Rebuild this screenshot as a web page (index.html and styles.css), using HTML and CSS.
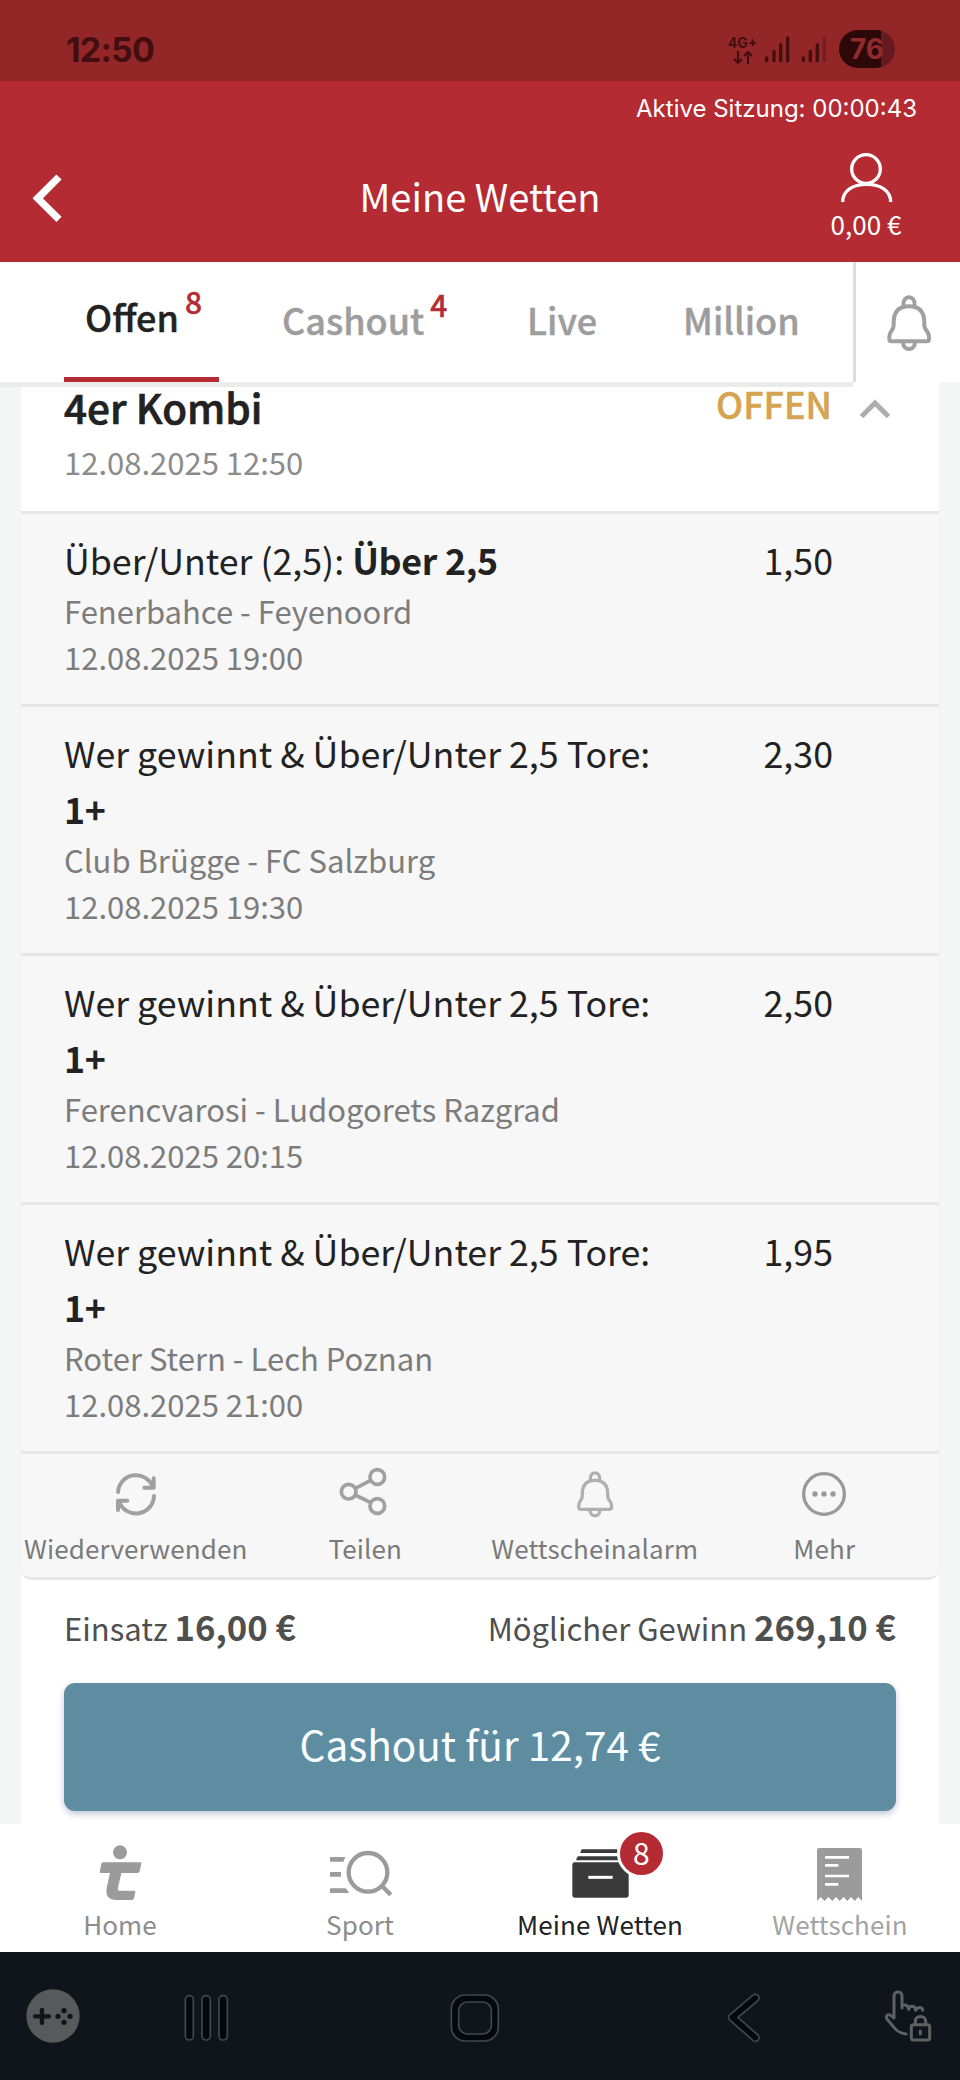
FILE: index.html
```html
<!DOCTYPE html>
<html lang="de">
<head>
<meta charset="utf-8">
<title>Meine Wetten</title>
<link rel="stylesheet" href="styles.css">
</head>
<body>
<svg width="0" height="0" class="defs">
  <symbol id="bell" viewBox="1198 90 180 185">
    <path d="M1271 130C1268 98 1308 98 1305 130M1242 190V182C1242 150 1258 133 1288 133S1334 150 1334 182V190C1334 206 1348 206 1348 224V231Q1348 238 1341 238H1236Q1229 238 1229 231V224C1229 206 1242 206 1242 190ZM1270 241C1270 268 1306 268 1306 241" fill="none" stroke="currentColor" stroke-width="12"/>
  </symbol>
</svg>

<div class="status">
  <div class="clock">12:50</div>
  <div class="net">
    <span class="net-type">4G+</span>
    <svg width="20" height="14" viewBox="0 0 20 14"><path d="M5 0V12M1 8L5 12L9 8M15 13V1M11 5L15 1L19 5" fill="none" stroke="#440e10" stroke-width="2.200"/></svg>
  </div>
  <svg class="signal" width="70" height="40" viewBox="840 90 210 120">
    <g fill="none" stroke="#440e10" stroke-width="10" stroke-linecap="round">
      <path d="M860 174V182M882 154V182M902 134V182M923 114V182M970 174V182M991 154V182M1012 134V182"/>
      <path d="M1033 114V182" stroke="#74201f"/>
    </g>
  </svg>
  <div class="battery">76</div>
</div>

<header class="header">
  <div class="session">Aktive Sitzung: 00:00:43</div>
  <div class="bar">
    <svg class="back" width="37" height="55" viewBox="90 510 111 165"><path d="M177 531L113 595L177 658" fill="none" stroke="#fff" stroke-width="22"/></svg>
    <h1 class="title">Meine Wetten</h1>
    <div class="account">
      <svg width="60" height="55" viewBox="1069 450 180 165"><g fill="none" stroke="#fff" stroke-width="10"><circle cx="1159" cy="507" r="43"/><path d="M1089 606C1089 571 1120 553 1161 553S1233 571 1233 606"/></g></svg>
      <span>0,00 €</span>
    </div>
  </div>
</header>

<nav class="tabs">
  <div class="tab-list">
    <div class="tab active"><span>Offen</span><b>8</b></div>
    <div class="tab"><span>Cashout</span><b>4</b></div>
    <div class="tab"><span>Live</span></div>
    <div class="tab"><span>Million</span></div>
  </div>
  <div class="alarm"><svg width="60" height="61.7"><use href="#bell"/></svg></div>
</nav>

<main class="page">
  <section class="card">
    <div class="card-head">
      <div>
        <h2 class="bet-type">4er Kombi</h2>
        <div class="bet-date">12.08.2025 12:50</div>
      </div>
      <div class="state">OFFEN</div>
      <svg class="chevron" width="32" height="22" viewBox="0 0 32 22"><path d="M2.500 18.500L16 5L29.500 18.500" fill="none" stroke="#adadad" stroke-width="5"/></svg>
    </div>

    <div class="leg">
      <div class="leg-text">
        <div class="pick">Über/Unter (2,5): <b>Über 2,5</b></div>
        <div class="info">Fenerbahce - Feyenoord</div>
        <div class="info">12.08.2025 19:00</div>
      </div>
      <div class="odds">1,50</div>
    </div>
    <div class="leg">
      <div class="leg-text">
        <div class="pick">Wer gewinnt &amp; Über/Unter 2,5 Tore:<br><b>1+</b></div>
        <div class="info">Club Brügge - FC Salzburg</div>
        <div class="info">12.08.2025 19:30</div>
      </div>
      <div class="odds">2,30</div>
    </div>
    <div class="leg">
      <div class="leg-text">
        <div class="pick">Wer gewinnt &amp; Über/Unter 2,5 Tore:<br><b>1+</b></div>
        <div class="info">Ferencvarosi - Ludogorets Razgrad</div>
        <div class="info">12.08.2025 20:15</div>
      </div>
      <div class="odds">2,50</div>
    </div>
    <div class="leg">
      <div class="leg-text">
        <div class="pick">Wer gewinnt &amp; Über/Unter 2,5 Tore:<br><b>1+</b></div>
        <div class="info">Roter Stern - Lech Poznan</div>
        <div class="info">12.08.2025 21:00</div>
      </div>
      <div class="odds">1,95</div>
    </div>

    <div class="actions">
      <div class="action">
        <svg width="60" height="60" viewBox="318 72 180 180"><g fill="none" stroke="#a0a0a0" stroke-width="12" stroke-linecap="round" stroke-linejoin="round"><path d="M354 156A54 54 0 0 1 459 142M461 115V143H433M462 168A54 54 0 0 1 357 184M354 210V182H382"/></g></svg>
        <span>Wiederverwenden</span>
      </div>
      <div class="action">
        <svg width="60" height="60" viewBox="1004 72 180 180"><g fill="none" stroke="#a0a0a0" stroke-width="11"><circle cx="1045" cy="155" r="22"/><circle cx="1131" cy="111" r="22"/><circle cx="1131" cy="198" r="22"/><path d="M1065 145L1111 121M1065 165L1111 188"/></g></svg>
        <span>Teilen</span>
      </div>
      <div class="action">
        <svg class="bell-small" width="60" height="60"><use href="#bell" x="4.500" y="4.500" width="51" height="51"/></svg>
        <span>Wettscheinalarm</span>
      </div>
      <div class="action">
        <svg width="60" height="60" viewBox="942 72 180 180"><circle cx="1032" cy="162" r="61" fill="none" stroke="#999" stroke-width="10"/><g fill="#999"><circle cx="1005" cy="162" r="8"/><circle cx="1032" cy="162" r="8"/><circle cx="1059" cy="162" r="8"/></g></svg>
        <span>Mehr</span>
      </div>
    </div>

    <div class="summary">
      <div class="amounts">
        <div>Einsatz <b>16,00 €</b></div>
        <div>Möglicher Gewinn <b>269,10 €</b></div>
      </div>
      <button class="cashout">Cashout für 12,74 €</button>
    </div>
  </section>
</main>

<nav class="bottom">
  <div class="item">
    <svg width="80" height="70" viewBox="240 510 240 210"><g fill="#9b9b9b"><circle cx="360" cy="577" r="21"/><path d="M309 607H422Q425 607 424 611L419 634Q418 639 413 639H364L354 683Q352 692 360 692H402Q407 692 406 697L402 715Q401 720 396 720H350Q314 720 320 684L330 639H302Q299 639 299 636L304 612Q305 607 309 607Z"/></g></svg>
    <span>Home</span>
  </div>
  <div class="item">
    <svg width="80" height="70" viewBox="960 510 240 210"><path d="M990 591H1036L1030 605H990ZM990 636H1023V650H990ZM990 685H1037L1048 699H990Z" fill="#9b9b9b"/><g fill="none" stroke="#9b9b9b"><circle cx="1104" cy="637" r="58" stroke-width="13"/><path d="M1144 676L1172 704" stroke-width="13"/></g></svg>
    <span>Sport</span>
  </div>
  <div class="item current">
    <svg width="80" height="70" viewBox="240 510 240 210"><g fill="#3a3a3a"><path d="M308 568H413V579H301L303 572Q304 568 308 568ZM296 589H415V601H288L291 593Q292 589 296 589Z"/><rect x="277" y="607" width="169" height="106" rx="7"/></g><path d="M325 652H398" stroke="#fff" stroke-width="9"/></svg>
    <i class="badge">8</i>
    <span>Meine Wetten</span>
  </div>
  <div class="item muted">
    <svg width="80" height="71.300" viewBox="960 510 240 214"><path d="M1011 723V571Q1011 564 1018 564H1139Q1146 564 1146 571V723L1135 711L1124 723L1113 711L1102 723L1091 711L1079 723L1068 711L1057 723L1045 711L1034 723L1022 711Z" fill="#9b9b9b"/><path d="M1035 592H1107M1035 616H1075M1035 648H1107M1035 673H1075" stroke="#fff" stroke-width="8"/></svg>
    <span>Wettschein</span>
  </div>
</nav>

<footer class="system">
  <svg width="60" height="80" viewBox="68 948 180 240"><circle cx="158" cy="1068" r="80" fill="#58595b"/><path d="M104 1069H146M125 1050V1089" stroke="#0f151b" stroke-width="13" stroke-linecap="round"/><g fill="#0f151b"><circle cx="191" cy="1052" r="8"/><circle cx="191" cy="1087" r="8"/><circle cx="173" cy="1069" r="8"/><circle cx="209" cy="1069" r="8"/></g></svg>
  <svg width="60" height="80" viewBox="528 948 180 240"><g fill="#04070b" stroke="#44484e" stroke-width="5"><rect x="556" y="1007" width="24" height="133" rx="12"/><rect x="606" y="1007" width="25" height="133" rx="12"/><rect x="657" y="1007" width="25" height="133" rx="12"/></g></svg>
  <svg width="60" height="80" viewBox="1335 948 180 240"><g stroke="#44484e" stroke-width="5"><rect x="1354" y="1005" width="141" height="138" rx="42" fill="#04070b"/><rect x="1376" y="1026" width="98" height="96" rx="26" fill="#0f151b"/></g></svg>
  <svg width="60" height="80" viewBox="702 948 180 240"><g fill="none" stroke-linecap="round" stroke-linejoin="round"><path d="M826 1014L757 1072L826 1133" stroke="#44484e" stroke-width="27"/><path d="M826 1014L757 1072L826 1133" stroke="#04070b" stroke-width="17"/></g></svg>
  <svg width="60" height="80" viewBox="1194 948 180 240"><g fill="none" stroke="#5e6063" stroke-width="9" stroke-linecap="round" stroke-linejoin="round"><path d="M1278 1122Q1252 1118 1241 1101L1221 1077Q1217 1070 1223 1065Q1229 1062 1235 1068L1242 1074V1007C1242 992 1266 992 1266 1007V1044M1266 1040C1270 1032 1286 1034 1286 1048C1289 1035 1306 1036 1307 1051C1312 1040 1327 1040 1328 1051"/><rect x="1294" y="1094" width="55" height="46" rx="6"/><path d="M1306 1092V1084C1306 1065 1337 1065 1337 1084V1092M1321 1113V1122"/></g></svg>
</footer>
</body>
</html>
```

FILE: styles.css
```css
* { box-sizing: border-box; }

body {
  margin: 0;
  width: 960px;
  background: #f4f6f6;
  font-family: "Noto Sans CJK SC", "Noto Sans", sans-serif;
  color: #222;
}

h1, h2 { margin: 0; font-weight: 400; }
svg { display: block; flex: none; }
.defs { position: absolute; }

/* status bar */
.status {
  display: flex;
  align-items: flex-start;
  height: 81px;
  padding: 30px 65px 0 66px;
  background: #932728;
  color: #440e10;
  font-family: Inter, sans-serif;
  font-weight: 700;
}
.clock { flex: 1; font-size: 34px; line-height: 40px; letter-spacing: -0.8px; }
.net { display: flex; flex-direction: column; align-items: center; width: 35px; padding-top: 5px; }
.net-type { font-size: 14px; line-height: 16px; }
.battery {
  width: 56px;
  height: 38px;
  margin: 0 0 0 9px;
  border-radius: 19px;
  background: linear-gradient(90deg, #2d0808 42px, #661a1f 42px);
  color: #932a2b;
  font-size: 28px;
  line-height: 38px;
  text-align: center;
}

/* header */
.header { height: 181px; background: #b52b33; color: #fff; }
.session {
  padding: 2px 43px 0 0;
  font: 24px/52px Inter, sans-serif;
  text-align: right;
}
.bar {
  display: grid;
  grid-template-columns: 1fr auto 1fr;
  height: 127px;
}
.back { margin: 35px 0 0 30px; }
.title { font-size: 38.1px; line-height: 121px; }
.account {
  display: flex;
  flex-direction: column;
  align-items: center;
  justify-self: end;
  width: 100px;
  margin-right: 44px;
  padding-top: 15px;
  font-size: 26px;
  line-height: 38px;
}

/* tabs */
.tabs { display: flex; height: 120px; background: #fff; }
.tab-list {
  display: grid;
  grid-template-columns: 218px 245px 156px 1fr;
  position: relative;
  z-index: 1;
  width: 853px;
  padding-left: 64px;
  box-shadow: 0 5px 0 #ebebeb;
}
.tab {
  display: flex;
  gap: 6px;
  padding-top: 37px;
  color: #9d9d9d;
  font-size: 36px;
  font-weight: 500;
  line-height: 40px;
  -webkit-text-stroke: 0.4px;
}
.tab b { margin-top: -10px; color: #b52b33; font-size: 30px; font-weight: 500; line-height: 30px; }
.tab.active {
  width: 155px;
  padding: 34px 0 0 21px;
  border-bottom: 5px solid #b52b33;
  color: #222;
}
.alarm {
  flex: 1;
  padding: 30px 0 0 23px;
  border-left: 3px solid #dedede;
  color: #a0a0a0;
}

/* bet slip */
.page { padding: 0 21px; }
.card { height: 1442px; background: #fff; }
.card-head {
  display: grid;
  grid-template-columns: 1fr auto auto;
  height: 132px;
  padding: 0 48px 0 43px;
  border-bottom: 3px solid #e6e6e6;
}
.bet-type { font-size: 40.5px; font-weight: 500; line-height: 49px; -webkit-text-stroke: 0.7px; }
.bet-date { margin-top: 8px; color: #8b8b8b; font-size: 31px; line-height: 46px; }
.state { color: #d6a350; font-size: 36px; font-weight: 500; line-height: 42px; -webkit-text-stroke: 0.5px; }
.chevron { margin: 16px 0 0 27px; }

.leg {
  display: flex;
  justify-content: space-between;
  padding: 18px 106px 24px 43px;
  border-bottom: 3px solid #e6e6e6;
  background: #f7f7f7;
}
.pick, .odds { font-size: 35.75px; line-height: 56px; white-space: nowrap; }
.pick b { font-weight: 700; letter-spacing: -0.3px; }
.info { color: #7c7c7c; font-size: 31px; line-height: 46px; white-space: nowrap; }

.actions {
  display: grid;
  grid-template-columns: repeat(4, 1fr);
  height: 126px;
  border-bottom: 3px solid #e6e6e6;
  border-radius: 0 0 10px 10px;
  background: #f7f7f7;
}
.action {
  display: flex;
  flex-direction: column;
  align-items: center;
  padding-top: 10px;
  color: #7a7a7a;
  font-size: 26px;
  letter-spacing: 0.13px;
  line-height: 47px;
}
.bell-small { color: #b0b0b0; }

.summary { padding: 22px 43px 0; }
.amounts {
  display: flex;
  justify-content: space-between;
  height: 50px;
  color: #4f4f4f;
  font-size: 31px;
  line-height: 48px;
}
.amounts b { font-size: 34.7px; font-weight: 700; }
.cashout {
  display: block;
  width: 100%;
  height: 128px;
  margin-top: 31px;
  padding: 0 0 8px;
  border: 0;
  border-radius: 11px;
  background: #5e8da2;
  box-shadow: 0 3px 6px rgba(60, 70, 120, 0.3);
  color: #fafeff;
  font-family: inherit;
  font-size: 40.5px;
}

/* bottom navigation */
.bottom {
  display: grid;
  grid-template-columns: repeat(4, 1fr);
  height: 128px;
  background: #fff;
}
.item {
  display: flex;
  flex-direction: column;
  align-items: center;
  position: relative;
  padding-top: 6px;
  color: #8c8c8c;
  font-size: 26px;
  letter-spacing: 0.13px;
}
.item span { margin-top: auto; padding-bottom: 7px; line-height: 46px; }
.item.current { color: #222; }
.item.muted { color: #a3a3a3; }
.badge {
  position: absolute;
  top: 5px;
  left: 137px;
  width: 49px;
  height: 49px;
  border: 3px solid #fff;
  border-radius: 50%;
  background: #b52b33;
  color: #fff;
  font-size: 30px;
  font-style: normal;
  line-height: 41px;
  text-align: center;
}

/* system navigation */
.system {
  display: grid;
  grid-template-columns: 153.5px 269px 269px 164px 60px;
  height: 128px;
  padding: 24px 0 0 22.5px;
  background: #0f151b;
}
```
